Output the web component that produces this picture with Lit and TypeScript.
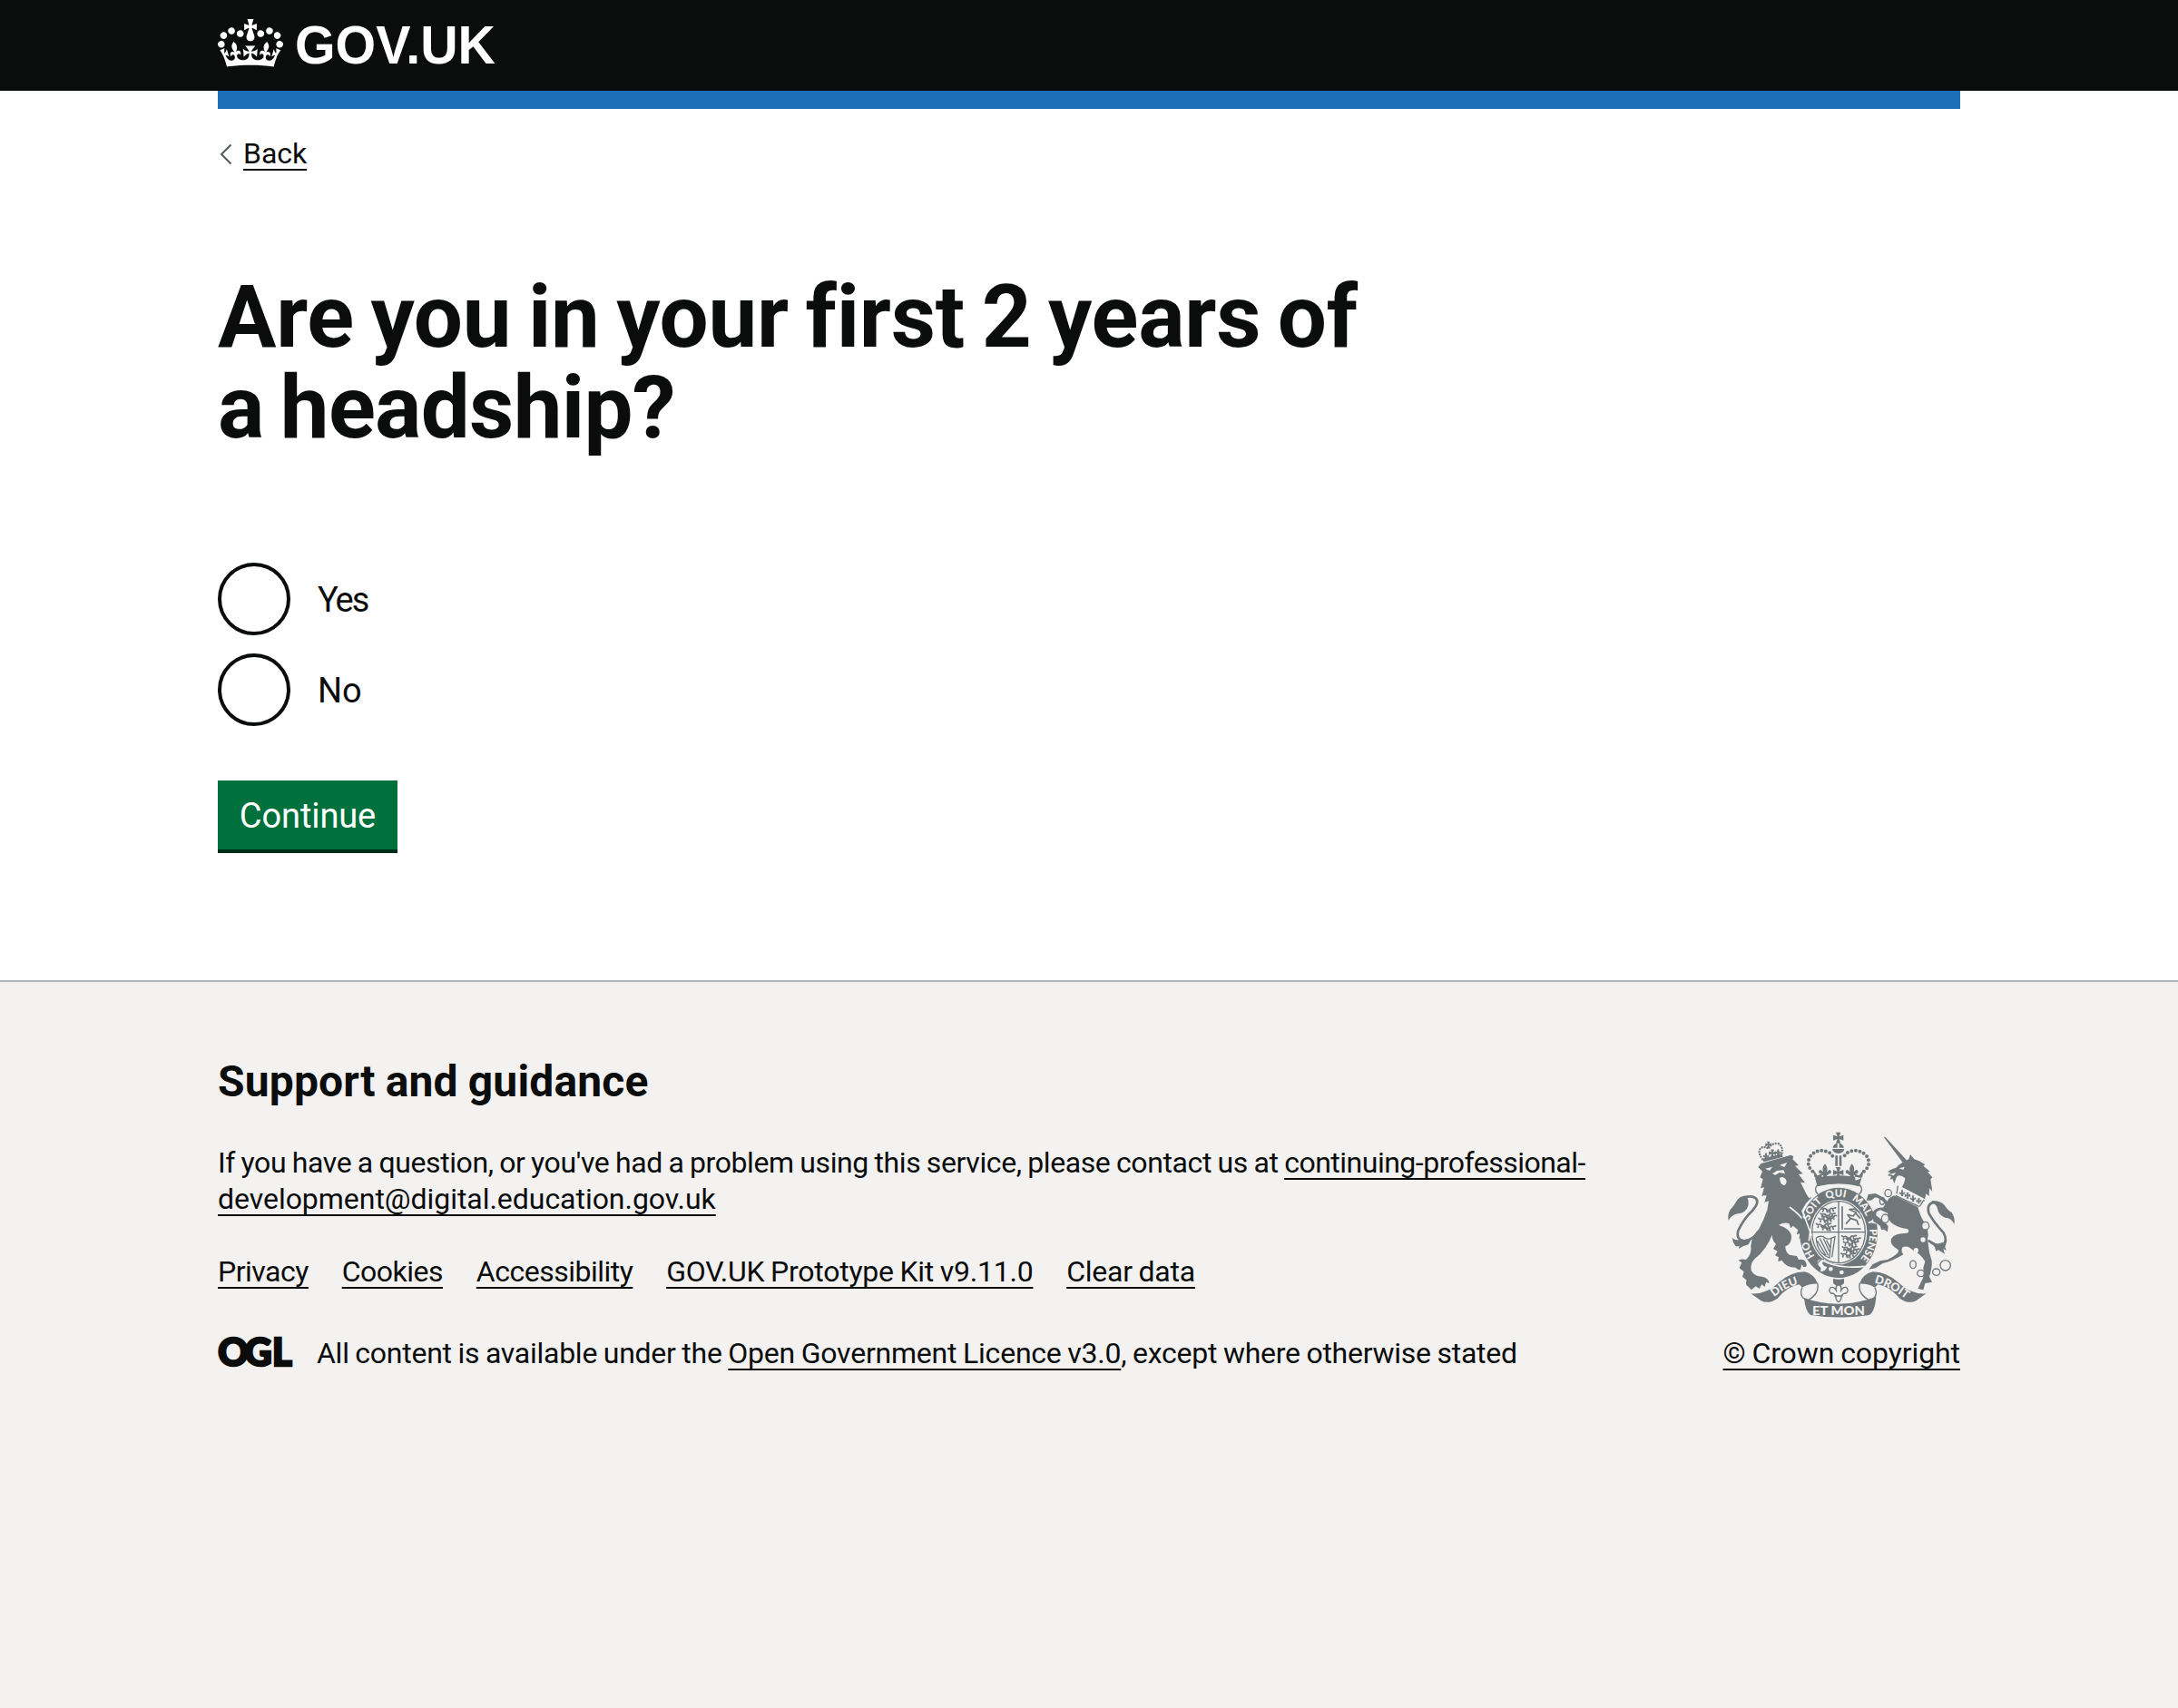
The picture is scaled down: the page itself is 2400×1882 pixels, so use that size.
import { LitElement, html, css, svg } from "lit";
import { customElement } from "lit/decorators.js";

@customElement("royal-crown-logo")
class RoyalCrownLogo extends LitElement {
  static styles = css`
    :host { display: flex; align-items: flex-start; }
    .crown { display: block; width: 72px; height: 53px; margin-top: 21px; fill: #fff; }
    .word { display: block; width: 228px; height: 60px; margin: 20px 0 0 12px; fill: #fff; overflow: visible; }
    .word text { font: bold 59.5px "Liberation Sans", Arial, sans-serif; }
  `;
  render() {
    return html`
      <svg class="crown" viewBox="0 0 132 97" aria-hidden="true">
        <path d="M25 30.2c3.5 1.5 7.7-.2 9.1-3.7 1.5-3.6-.2-7.8-3.9-9.2-3.6-1.4-7.6.3-9.1 3.9-1.4 3.5.3 7.5 3.9 9zM9 39.5c3.6 1.5 7.8-.2 9.2-3.7 1.5-3.6-.2-7.8-3.9-9.1-3.6-1.5-7.6.2-9.1 3.8-1.4 3.5.3 7.5 3.8 9zM4.4 57.2c3.5 1.5 7.7-.2 9.1-3.8 1.5-3.6-.2-7.7-3.9-9.1-3.5-1.5-7.6.3-9.1 3.8-1.4 3.5.3 7.6 3.9 9.1zm38.3-21.4c3.5 1.5 7.7-.2 9.1-3.8 1.5-3.6-.2-7.7-3.9-9.1-3.6-1.5-7.6.3-9.1 3.8-1.3 3.6.4 7.7 3.9 9.1zm64.4-5.6c-3.6 1.5-7.8-.2-9.1-3.7-1.5-3.6.2-7.8 3.8-9.2 3.6-1.4 7.7.3 9.2 3.9 1.3 3.5-.4 7.5-3.9 9zm15.9 9.3c-3.6 1.5-7.7-.2-9.1-3.7-1.5-3.6.2-7.8 3.7-9.1 3.6-1.5 7.7.2 9.2 3.8 1.5 3.5-.3 7.5-3.8 9zm4.7 17.7c-3.6 1.5-7.8-.2-9.2-3.8-1.5-3.6.2-7.7 3.9-9.1 3.6-1.5 7.7.3 9.2 3.8 1.3 3.5-.4 7.6-3.9 9.1zM89.3 35.8c-3.6 1.5-7.8-.2-9.2-3.8-1.4-3.6.2-7.7 3.9-9.1 3.6-1.5 7.7.3 9.2 3.8 1.4 3.6-.3 7.7-3.9 9.1zM69.7 17.7l8.9 4.7V9.3l-8.9 2.8c-.2-.3-.5-.6-.9-.9L72.4 0H59.6l3.5 11.2c-.3.3-.6.5-.9.9l-8.8-2.8v13.1l8.8-4.7c.3.3.6.7.9.9l-5 15.4v.1c-.2.8-.4 1.6-.4 2.4 0 4.1 3.1 7.5 7 8.1h.2c.3 0 .7.1 1 .1.4 0 .7 0 1-.1h.2c4-.6 7.1-4.1 7.1-8.1 0-.8-.1-1.7-.4-2.4V34l-5.1-15.4c.4-.2.7-.6 1-.9zM66 92.8c16.9 0 32.8 1.1 47.1 3.2 4-16.9 8.9-26.7 14-33.5l-9.6-3.4c1 4.9 1.1 7.2 0 10.2-1.5-1.4-3-4.3-4.2-8.7L108.6 76c2.8-2 5-3.2 7.5-3.3-4.4 9.4-10 11.9-13.6 11.2-4.3-.8-6.3-4.6-5.6-7.9 1-4.7 5.7-5.9 8-.5 4.3-8.7-3-11.4-7.6-8.8 7.1-7.2 7.9-13.5 2.1-21.1-8 6.1-8.1 12.3-4.5 20.8-4.7-5.4-12.1-2.5-9.5 6.2 3.4-5.2 7.9-2 7.2 3.1-.6 4.3-6.4 7.8-13.5 7.2-10.3-.9-10.9-8-11.2-13.8 2.5-.5 7.1 1.8 11 7.3L80.2 60c-4.1 4.4-8 5.3-12.3 5.4 1.4-4.4 8-11.6 8-11.6H55.5s6.4 7.2 7.9 11.6c-4.2-.1-8-1-12.3-5.4l1.4 16.4c3.9-5.5 8.5-7.7 10.9-7.3-.3 5.8-.9 12.8-11.1 13.8-7.2.6-12.9-2.9-13.5-7.2-.7-5 3.8-8.3 7.1-3.1 2.7-8.7-4.6-11.6-9.4-6.2 3.7-8.5 3.6-14.7-4.6-20.8-5.8 7.6-5 13.9 2.2 21.1-4.7-2.6-11.9.1-7.7 8.8 2.3-5.5 7.1-4.2 8.1.5.7 3.3-1.3 7.1-5.7 7.9-3.5.7-9-1.8-13.5-11.2 2.5.1 4.7 1.3 7.5 3.3l-4.7-15.4c-1.2 4.4-2.7 7.2-4.3 8.7-1.1-3-.9-5.3 0-10.2l-9.5 3.4c5 6.9 9.9 16.7 14 33.5 14.8-2.1 30.8-3.2 47.7-3.2z"></path>
      </svg>
      <svg class="word" viewBox="0 0 228 60">
        <text x="1" y="49.7" textLength="221" lengthAdjust="spacingAndGlyphs">GOV.UK</text>
      </svg>
    `;
  }
}

const crossPatee = (x: number, y: number, k: number) => svg`
  <path class="dark" transform="translate(${x} ${y}) scale(${k})"
    d="M-8-18H8L3-4 17-9V9L3 4 8 18H-8L-3 4-17 9V-9L-3-4z"></path>`;

const fleur = (x: number, y: number, k: number) => svg`
  <path class="dark" transform="translate(${x} ${y}) scale(${k})"
    d="M0-20Q10-8 5 4Q14-8 18 2Q18 10 10 9Q9 14 5 13L7 22H-7L-5 13Q-9 14-10 9Q-18 10-18 2Q-14-8-5 4Q-10-8 0-20z"></path>`;

const beast = (x: number, y: number) => svg`
  <path class="beast" transform="translate(${x} ${y})"
    d="M0 2q8-6 14 0t12-1 10 1M4 3l-3 8M14 3l2 7 4 1M26 3l-2 8 5 0M34 2l4 7M36 0q6-6 10-2M0 0l-5-4"></path>`;

/* Words of the garter, each with its angle in radians, clockwise from the bottom. */
const GARTER: [string, number][] = [
  ["HO", 1.08], ["SOIT", 2.27], ["QUI", 3.06], ["MAL", 3.88], ["Y", 4.41], ["PENSE", 5.07],
];

const garterPoint = (t: number) =>
  `${(438 - 103 * Math.sin(t)).toFixed(1)} ${(385 + 119 * Math.cos(t)).toFixed(1)}`;

@customElement("royal-arms")
class RoyalArms extends LitElement {
  static styles = css`
    :host { display: block; }
    svg { display: block; width: 254px; height: 208px; }
    .dark { fill: #6f777b; }
    .pale { fill: #f3f2f1; }
    .line { fill: none; stroke: #6f777b; stroke-width: 4; }
    .tail { fill: none; stroke: #6f777b; stroke-width: 8; stroke-linecap: round; }
    .gap { fill: none; stroke: #f3f2f1; stroke-width: 5; }
    .pearls { fill: none; stroke: #6f777b; stroke-width: 12; stroke-linecap: round; stroke-dasharray: 0 14; }
    .small { stroke-width: 7; stroke-dasharray: 0 9; }
    .beast { fill: none; stroke: #6f777b; stroke-width: 5; stroke-linejoin: round; }
    text { font: 900 34px Lato, "Liberation Sans", sans-serif; fill: #f3f2f1; text-anchor: middle; }
    .ribbon { font-size: 42px; }
    .side { font-size: 38px; }
  `;
  render() {
    return html`
      <svg viewBox="66 48 762 624" role="img" aria-hidden="true">
        <defs>
          ${GARTER.map(([, t], i) => svg`<path id="garter-${i}" d="M${garterPoint(t - 0.7)}A103 119 0 0 1 ${garterPoint(t + 0.7)}"></path>`)}
          <path id="left" d="M212 610Q262 560 322 552"></path>
          <path id="right" d="M546 549Q600 556 668 610"></path>
        </defs>

        <path class="tail" d="M178 378Q150 412 125 412Q98 408 106 378Q125 338 153 312Q178 284 164 271Q150 260 125 270"></path>
        <path class="dark" d="M140 262Q108 262 98 284Q90 300 80 308Q70 326 74 344Q86 325 106 322Q132 318 139 296Q142 278 136 270zM86 402L96 408L118 410L150 405L140 424L122 430L108 438L110 430L98 430Q88 418 86 402z"></path>
        <path class="dark" d="M172 168L182 156L196 152L280 128L289 133L286 142L306 162L294 164L320 190L306 192L327 220L312 218L332 258L340 270L350 268L330 288L316 312L322 330L336 344L346 368L349 395L341 390L345 412L332 402L326 414L319 400L307 404L311 388L299 390L304 376L287 362L280 370L274 354Q255 350 240 360Q284 374 282 402Q280 425 262 430Q262 450 276 458L300 462L306 474Q326 470 331 485Q336 500 322 498L316 490L312 506Q304 510 296 500Q280 500 270 495Q255 485 250 476L238 480L240 466L228 460L236 446L222 438L231 422Q218 410 218 392Q200 440 160 472Q145 488 149 510Q160 530 185 530Q208 535 208 552L198 548L194 564L184 556L176 570L164 562L150 574L138 562Q128 555 134 542L120 530L125 514L110 502L118 484L107 476Q118 470 132 474Q152 455 148 430Q148 400 175 372Q190 345 202 310L207 280L193 284L200 262L184 264L192 235L180 238L188 208L178 202L186 182z"></path>
        <path class="pale" d="M195 173l24-6-9 13zM243 161l25-8-9 15zM219 190l15-10 22-2 5 12-18-4-14 8zM244 210q-3-8 6-9 14 2 16 14-2 14-10 13-11-4-12-18z"></path>
        <path class="gap" d="M276 300Q310 325 322 345M186 282L192 262"></path>

        <path class="dark" d="M186 140L250 124L254 134L190 151z"></path>
        <path class="pearls small" d="M186 142Q168 116 182 104Q194 98 206 108Q216 88 238 90Q256 98 250 126"></path>
        ${crossPatee(206, 94, 0.6)} ${crossPatee(219, 122, 0.7)} ${fleur(198, 130, 0.55)} ${fleur(238, 118, 0.55)}

        ${crossPatee(437, 71, 1)}
        <path class="dark" d="M418 104Q422 90 434 89V104zM456 104Q452 90 440 89V104zM417 108H457Q455 122 437 123Q420 122 417 108zM427 130h8v34h-8zM440 130h8v34h-8z"></path>
        <path class="pearls" d="M352 182Q328 160 345 132Q368 104 404 118Q416 124 421 138"></path>
        <path class="pearls" d="M522 182Q548 160 531 132Q506 104 471 118Q459 124 454 138"></path>
        ${crossPatee(437, 186, 1)} ${fleur(393, 180, 1.15)} ${fleur(482, 180, 1.15)}
        <path class="dark" d="M354 176L368 196L384 190L380 212Q365 208 358 200zM520 176L506 196L490 190L494 212Q510 208 517 200zM360 204Q438 188 514 204L506 232Q438 214 368 232z"></path>
        <path class="line" d="M367 228Q438 212 509 228Q521 244 506 258M367 228Q355 244 370 258"></path>

        <ellipse class="dark" cx="438" cy="385" rx="129" ry="149"></ellipse>
        <ellipse class="pale" cx="438" cy="383" rx="94" ry="107"></ellipse>
        <ellipse class="line" cx="438" cy="383" rx="88" ry="102"></ellipse>
        <path class="line" d="M438 281V485M350 383H526"></path>
        ${beast(384, 306)} ${beast(382, 324)} ${beast(376, 340)} ${beast(368, 358)} ${beast(386, 332)} ${beast(384, 366)}
        ${beast(452, 398)} ${beast(466, 406)} ${beast(458, 418)} ${beast(454, 434)} ${beast(462, 442)} ${beast(450, 456)}
        <path class="beast" d="M462 356L478 338L468 326L486 330L496 318L474 308L490 306L508 318M478 338L498 344L504 360M496 322L510 338M456 372H512M450 374V298"></path>
        <path class="line" d="M364 402Q366 452 408 468L414 404Q398 408 388 398Q374 394 364 402M376 404L404 460M388 404L408 448M398 410L410 434M368 412L396 460M412 404L426 398L416 466"></path>
        <path class="gap" d="M345 372L340 412M318 312L349 395"></path>
        ${GARTER.map(([word], i) => svg`<text><textPath href="#garter-${i}" startOffset="50%">${word}</textPath></text>`)}
        <path class="gap" d="M384 476Q438 506 524 496"></path>
        <path class="pale" d="M368 478q18-14 26-2-14 6-8 14 4 8 14 8-8 18-22 14 4-12-4-16-8-4-6-18z"></path>
        <path class="line" d="M372 482q10-14 18-8M378 506q-14-8-8-26"></path>
        <circle class="pale" cx="412" cy="505" r="7"></circle>
        <circle class="pale" cx="448" cy="516" r="7"></circle>

        <path class="dark" d="M587 68L593 69L664 146L650 153z"></path>
        <path class="dark" d="M650 152L670 142L675 126L688 142L705 148L724 160L718 164L740 182L732 184L748 202L742 208L748 248L738 238L737 264L727 256L722 282L700 275L640 244Q656 225 658 205Q640 190 630 200L622 222L616 206L608 210L612 198L600 196L610 186L600 184Q606 176 628 170Q636 160 650 152z"></path>
        <path class="pale" d="M638 172l18-5-4 10zM606 192l22-6-8 10z"></path>
        <path class="dark" d="M622 262L700 300Q708 330 718 345Q740 380 732 405Q735 430 738 450L746 478Q748 500 738 530L747 548L724 552L718 574L700 570L712 545Q722 530 718 500L724 480Q705 450 688 447Q670 425 650 432Q642 445 652 457Q610 482 584 486L560 502L538 506L550 490L575 478L600 474Q640 454 636 442Q605 425 612 405Q622 386 665 386Q675 380 665 372Q635 370 612 352Q600 338 600 320L577 310Q560 312 562 328L585 346L602 362L600 382L588 374L580 376L575 362L553 345L549 320Q560 300 585 302L592 290Q575 270 560 268L545 278L530 278L536 258L560 255Q588 268 600 282Q600 270 622 262z"></path>
        <path class="pale" d="M632 226L724 274L708 302L620 260z"></path>
        <path class="line" d="M634 230L630 256M626 262L704 298M720 276L706 298"></path>
        ${fleur(648, 252, 0.55)} ${crossPatee(666, 262, 0.55)} ${fleur(684, 270, 0.55)} ${crossPatee(703, 280, 0.5)}
        <path class="tail" d="M737 412Q760 430 782 428Q800 412 785 385Q752 350 736 320Q728 288 755 284"></path>
        <path class="dark" d="M746 280Q776 278 788 294Q800 312 812 318Q824 336 820 357Q812 336 790 335Q768 326 765 306Q762 290 746 288zM736 410L762 422L795 414L790 432L794 444L784 438L789 455L768 442L760 446L756 432z"></path>
        <g class="line">
          <ellipse cx="602" cy="254" rx="11" ry="12"></ellipse>
          <ellipse class="pale" cx="592" cy="338" rx="12" ry="14"></ellipse>
          <ellipse cx="582" cy="280" rx="8" ry="12"></ellipse>
          <ellipse class="pale" cx="725" cy="362" rx="12" ry="13"></ellipse>
          <ellipse cx="684" cy="490" rx="10" ry="13"></ellipse>
          <ellipse cx="710" cy="519" rx="12" ry="11"></ellipse>
          <ellipse cx="761" cy="515" rx="12" ry="11"></ellipse>
          <circle cx="791" cy="493" r="17"></circle>
        </g>
        <circle class="pale" cx="717" cy="408" r="8"></circle>
        <circle class="pale" cx="694" cy="443" r="8"></circle>

        <path class="dark" d="M148 586Q200 590 240 550Q280 514 325 514Q356 520 370 554Q342 552 318 566L308 556Q270 562 236 602Q206 622 182 610z"></path>
        <path class="dark" d="M728 586Q676 590 636 550Q596 514 551 514Q520 520 506 554Q534 552 558 566L568 556Q606 562 640 602Q670 622 694 610z"></path>
        <path class="line" d="M318 566Q306 592 328 606M368 552Q376 585 340 606M558 566Q570 592 548 606M508 552Q500 585 536 606"></path>
        <path class="dark" d="M324 600Q438 642 562 596Q558 650 536 658Q438 672 345 657Q328 645 324 600z"></path>
        <text class="side"><textPath href="#left" startOffset="50%">DIEU</textPath></text>
        <text class="side"><textPath href="#right" startOffset="50%">DROIT</textPath></text>
        <text class="ribbon" x="438" y="656" textLength="174" lengthAdjust="spacingAndGlyphs">ET MON</text>

        <path class="dark" d="M420 537Q438 542 456 537V552L446 560H430L420 552z"></path>
        <path class="line" d="M438 552Q452 566 444 580Q452 562 464 566Q474 576 462 586Q456 582 448 592L446 604Q438 624 430 604L428 592Q420 582 414 586Q402 576 412 566Q424 562 432 580Q424 566 438 552M424 594H452"></path>
      </svg>
    `;
  }
}

@customElement("app-root")
class AppRoot extends LitElement {
  static styles = css`
    :host {
      display: flex; flex-direction: column; min-height: 1882px; background: #fff; color: #0b0c0c;
      font: 32px/40px Roboto, "Noto Sans", sans-serif; word-spacing: -1px;
    }
    * { box-sizing: border-box; }
    .container { width: 1920px; margin: 0 auto; }
    .header { height: 100px; background: #0b0c0c; }
    .bar { height: 20px; background: #1d70b8; }
    a {
      color: #0b0c0c; text-decoration: underline; text-decoration-thickness: 2px;
      text-underline-offset: 6px; text-decoration-skip-ink: none;
    }
    .back { display: flex; align-items: center; margin-top: 29px; height: 40px; }
    .chevron { display: block; width: 28px; height: 40px; }
    .main { height: 891px; padding-top: 110px; }
    h1 { margin: 0; font-size: 96px; line-height: 100px; font-weight: 700; word-spacing: -5px; }
    .line { display: block; }
    .line-1 { letter-spacing: -0.25px; }
    .line-2 { letter-spacing: -0.7px; }
    .radios { display: flex; flex-direction: column; gap: 20px; margin-top: 121px; }
    .radio { display: flex; align-items: center; gap: 30px; height: 80px; font-size: 38px; cursor: pointer; }
    .label { padding-top: 2px; }
    .label-yes { letter-spacing: -2px; }
    .dot { width: 80px; height: 80px; border: 4px solid #0b0c0c; border-radius: 50%; }
    .button {
      display: block; width: 198px; height: 76px; margin-top: 60px; padding: 3px 0 0; border: 0; background: #00703c;
      box-shadow: 0 4px 0 #002d18; color: #fff; font: 38px/73px Roboto, "Noto Sans", sans-serif; letter-spacing: -0.1px;
    }
    .footer { flex: 1; border-top: 2px solid #b1b4b6; background: #f3f2f1; padding-top: 80px; }
    .columns { display: flex; justify-content: space-between; align-items: flex-end; }
    h2 { margin: 0; font-size: 48px; line-height: 60px; font-weight: 700; letter-spacing: 0.15px; }
    p { margin: 39px 0 40px; width: 1560px; letter-spacing: -0.39px; }
    .tight { letter-spacing: -0.5px; }
    .loose { letter-spacing: -0.04px; }
    .links { display: flex; gap: 36.8px; margin: 0 0 50px; padding: 0; list-style: none; }
    .kit { letter-spacing: -0.24px; }
    .licence { display: flex; gap: 27px; letter-spacing: -0.26px; }
    .governing { letter-spacing: -0.22px; }
    .ogl { display: block; width: 82px; height: 40px; fill: #0b0c0c; stroke: #0b0c0c; stroke-width: 2.6; overflow: visible; }
    .ogl text { font: 900 41.5px Lato, sans-serif; letter-spacing: 0; word-spacing: 0; }
    .rights { display: flex; flex-direction: column; align-items: flex-end; gap: 17px; letter-spacing: -0.09px; }
    .arms { margin-right: 4px; word-spacing: 0; letter-spacing: 0; }
  `;
  render() {
    return html`
      <header class="header"><div class="container"><royal-crown-logo></royal-crown-logo></div></header>
      <div class="container">
        <div class="bar"></div>
        <div class="back">
          <svg class="chevron" viewBox="0 0 28 40"><path d="M14.5 10.5L4 21L14.5 31.5" fill="none" stroke="#505a5f" stroke-width="2"></path></svg>
          <a class="loose">Back</a>
        </div>
        <main class="main">
          <h1><span class="line line-1">Are you in your first 2 years of</span><span class="line line-2">a headship?</span></h1>
          <div class="radios">
            ${["Yes", "No"].map((t) => html`<label class="radio"><span class="dot"></span><span class="label label-${t.toLowerCase()}">${t}</span></label>`)}
          </div>
          <button class="button">Continue</button>
        </main>
      </div>
      <footer class="footer">
        <div class="container columns">
          <div>
            <h2>Support and guidance</h2>
            <p>If you have a question, or you've had a problem using this service, please contact us at <a><span class="tight">continuing-professional-</span><br /><span class="loose">development@digital.education.gov.uk</span></a></p>
            <ul class="links">
              ${["Privacy", "Cookies", "Accessibility", "GOV.UK Prototype Kit v9.11.0", "Clear data"].map(
                (t) => html`<li><a class=${t.includes(" ") ? "kit" : "tight"}>${t}</a></li>`,
              )}
            </ul>
            <div class="licence">
              <svg class="ogl" viewBox="0 0 82 40"><text x="0.3 29.5 60" y="33.5">OGL</text></svg>
              <span>All content is available under the <a class="governing">Open Government Licence v3.0</a>, except where otherwise stated</span>
            </div>
          </div>
          <div class="rights">
            <royal-arms class="arms"></royal-arms>
            <a>© Crown copyright</a>
          </div>
        </div>
      </footer>
    `;
  }
}
